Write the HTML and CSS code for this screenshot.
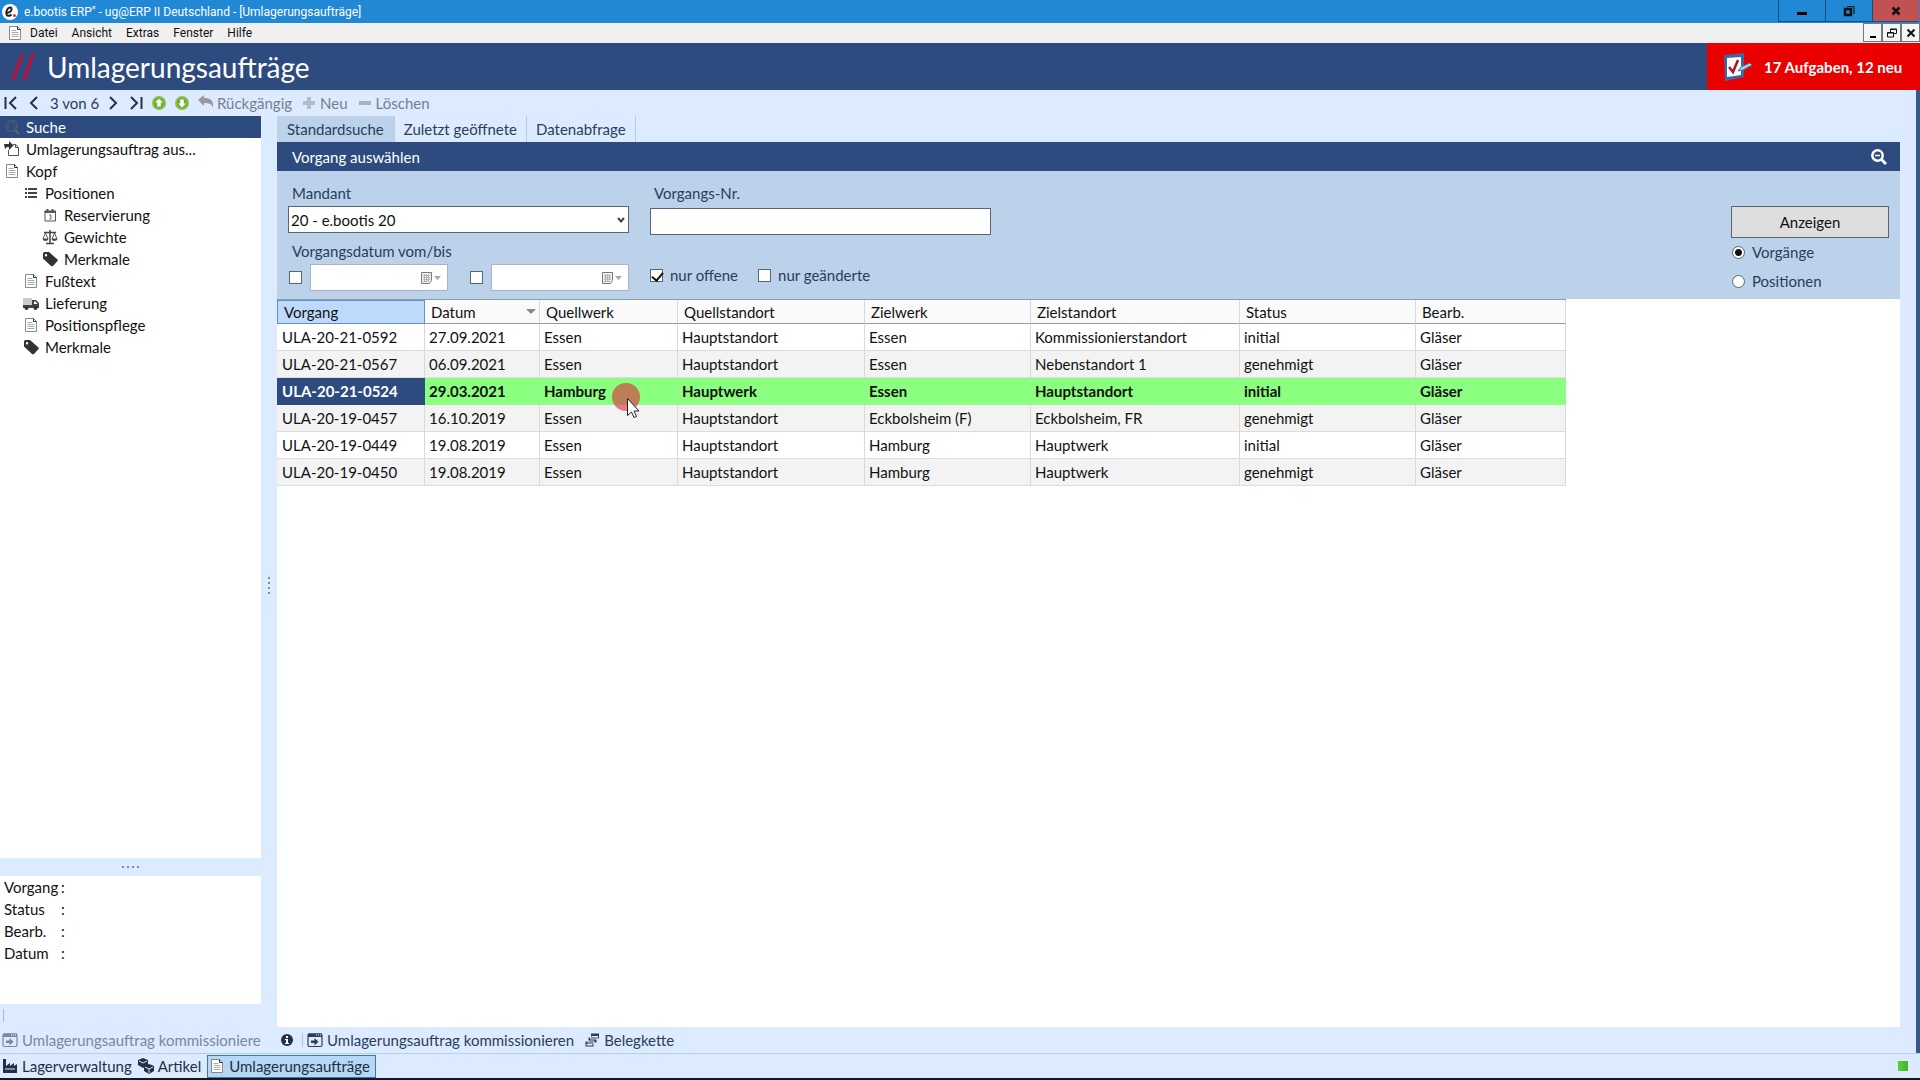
FILE: index.html
```html
<!DOCTYPE html>
<html lang="de">
<head>
  <meta charset="UTF-8" />
  <meta name="viewport" content="width=device-width, initial-scale=1" />
  <title>e.bootis ERP - Umlagerungsaufträge</title>
  <link rel="stylesheet" href="styles.css">
</head>
<body>

<svg class="sprite" aria-hidden="true">
  <symbol id="doc" viewBox="0 0 16 16">
    <path d="M2.500 1.500h8l3 3v10h-11z" fill="#fff" stroke="#888"/>
    <path d="M10.500 1.500v3h3" fill="none" stroke="#333"/>
    <path d="M4.500 5.500h5M4.500 7.500h7M4.500 9.500h7M4.500 11.500h7" stroke="#aaa"/>
  </symbol>
  <symbol id="import" viewBox="0 0 16 16">
    <path d="M9 3.500h2.500l3 3v8h-10V9M11.500 3.500v3h3" fill="none" stroke="#555"/>
    <path d="M0 3h5V0l4.500 4.500L5 9V6H3L1 8z" fill="#333"/>
  </symbol>
  <symbol id="search" viewBox="0 0 16 16">
    <circle cx="7.500" cy="7" r="5.500" fill="none" stroke="#5d6272"/>
    <circle cx="7.500" cy="7" r="3.500" fill="none" stroke="#4d566e"/>
    <path d="M11 11l4 4" stroke="#5d6272" stroke-width="2"/>
  </symbol>
  <symbol id="list" viewBox="0 0 16 16">
    <path d="M2 4h2M2 8h2M2 12h2M5 4h9M5 8h9M5 12h9" stroke="#444" stroke-width="2"/>
  </symbol>
  <symbol id="calendar" viewBox="0 0 16 16">
    <path d="M3 4.500h10.500v9.500H3z" fill="none" stroke="#555"/>
    <path d="M2.500 3.500h11.500v2.500H2.500zM4.500 2h2v3h-2zM9.500 2h2v3h-2z" fill="#555"/>
    <path d="M7 8h2v1.500H8h1V12H7" fill="none" stroke="#777"/>
  </symbol>
  <symbol id="scales" viewBox="0 0 16 16">
    <path d="M8 1v13M4 14.500h8M2 3.500h12" stroke="#444" stroke-width="1.500"/>
    <path d="M3.500 4L1 10h5L3.500 4M12.500 4L10 10h5l-2.500-6" fill="none" stroke="#555"/>
    <path d="M.5 10h6c-1 2.500-5 2.500-6 0M9.500 10h6c-1 2.500-5 2.500-6 0" fill="#444"/>
  </symbol>
  <symbol id="tag" viewBox="0 0 16 16">
    <path fill-rule="evenodd" d="M1 2.500Q1 1 2.500 1H7l8.500 7.500q.5 1 0 1.500L11 15q-1 .5-2 0L1 7.500zM4 3a1.200 1.200 0 100 2.400A1.200 1.200 0 004 3z" fill="#333"/>
  </symbol>
  <symbol id="truck" viewBox="0 0 16 16">
    <path d="M0 3h9v8H0z" fill="#ccc"/>
    <path fill-rule="evenodd" d="M0 10h9V5h4l3 3v5H0zM11 6.500V9h3.500L12.500 6.500z" fill="#444"/>
    <circle cx="3.500" cy="13" r="2" fill="#333"/><circle cx="12.500" cy="13" r="2" fill="#333"/>
  </symbol>
  <symbol id="window" viewBox="0 0 16 16">
    <rect x="1" y="2" width="14" height="12.500" rx="1.500" fill="none" stroke="currentColor" stroke-width="1.200"/>
    <path d="M1 1.500h14V5H1zM4 8.500h3.500V6l4 3.700-4 3.800V11H4z" fill="currentColor"/>
    <path d="M9 3h1M11 3h1M13 3h1" stroke="#fff"/>
  </symbol>
  <symbol id="cascade" viewBox="0 0 16 16">
    <path d="M6.500 1h9v6h-9zM4 5h9v6H4zM1 9h9v6H1z" fill="currentColor" stroke="#dcebff"/>
    <path d="M2.500 12h6v1.500h-6zM8 4h6v1H8z" fill="#dcebff"/>
  </symbol>
  <symbol id="up" viewBox="0 0 16 16">
    <circle cx="8" cy="8" r="8" fill="#8dc04a"/><circle cx="8" cy="8" r="6" fill="#74ad35"/>
    <path d="M8 3l4.500 4.500h-2.500V12H6V7.500H3.500z" fill="#fff"/>
  </symbol>
  <symbol id="calpick" viewBox="0 0 20 12">
    <path d="M.5.5h10v8l-2 3h-8z" fill="#f4f4f4" stroke="#777"/>
    <path d="M2 3.500h7M2 5.500h7M2 7.500h7M2 9.500h5M3.500 2v8M5.500 2v8M7.500 2v8" stroke="#aaa" stroke-width=".8"/>
    <path d="M13 4h7l-3.500 4z" fill="#aaa"/>
  </symbol>
</svg>

<header class="titlebar">
  <svg class="app-logo" viewBox="0 0 16 16"><circle cx="8" cy="8" r="8" fill="#fff"/><path d="M4 8.500c5 1 7-4 4.500-5C5.500 3 3.500 8 4.500 10.500c1 2 3.500 1.500 5 0" fill="none" stroke="#222" stroke-width="2"/><circle cx="12.500" cy="11.500" r="1.500" fill="#d33"/></svg>
  <span class="app-title">e.bootis ERP" - ug@ERP II Deutschland - [Umlagerungsaufträge]</span>
  <div class="window-buttons">
    <button aria-label="Minimieren"><svg viewBox="0 0 12 12"><path d="M1 7h10v3H1z"/></svg></button>
    <button aria-label="Verkleinern"><svg viewBox="0 0 12 12"><path d="M2 4h6v6H2z" fill="none" stroke="#111" stroke-width="2.500"/><path d="M4 1.500h7V9" fill="none" stroke="#111"/></svg></button>
    <button class="close" aria-label="Schließen"><svg viewBox="0 0 12 12"><path d="M2.500 2.500l7 7M9.500 2.500l-7 7" stroke="#111" stroke-width="2.500"/></svg></button>
  </div>
</header>

<nav class="menubar">
  <svg class="icon"><use href="#doc"/></svg>
  <a href="#">Datei</a>
  <a href="#">Ansicht</a>
  <a href="#">Extras</a>
  <a href="#">Fenster</a>
  <a href="#">Hilfe</a>
  <div class="mdi-buttons">
    <button aria-label="Fenster minimieren"><svg viewBox="0 0 10 10"><path d="M2 8h6v2H2z"/></svg></button>
    <button aria-label="Fenster verkleinern"><svg viewBox="0 0 10 10"><path d="M3.500 4V1h6v4.500H7M3 1.500h7M.5 4.500h6V9h-6zM0 5h7" fill="none" stroke="#111"/></svg></button>
    <button aria-label="Fenster schließen"><svg viewBox="0 0 10 10"><path d="M1.500 1.500l7 7M8.500 1.500l-7 7" stroke="#111" stroke-width="2"/></svg></button>
  </div>
</nav>

<div class="page-head">
  <svg class="slashes" viewBox="0 0 24 26"><path d="M9.500 0H13L3.500 26H0zM20.500 0H24l-9.500 26H11z" fill="#b3123c"/></svg>
  <h1>Umlagerungsaufträge</h1>
  <a class="tasks" href="#">
    <svg viewBox="0 0 30 30"><path d="M1 3l20-2v24L2 29z" fill="#3b69a8"/><path d="M4 6l14-1v18L4 25z" fill="#fff"/><path d="M6 15l4 5 5-12" fill="none" stroke="#b01030" stroke-width="2.500"/><path d="M15 19l3-4 9-4 2 2-9 5z" fill="#9fd4f2" stroke="#3b75aa"/></svg>
    <span>17 Aufgaben, 12 neu</span>
  </a>
</div>

<div class="client">
  <div class="toolbar">
    <button class="nav" aria-label="Erster"><svg viewBox="0 0 14 14"><path d="M1.500 1v12M12 1L6 7l6 6"/></svg></button>
    <button class="nav" aria-label="Zurück"><svg viewBox="0 0 14 14"><path d="M10 1L4 7l6 6"/></svg></button>
    <span class="position">3 von 6</span>
    <button class="nav" aria-label="Weiter"><svg viewBox="0 0 14 14"><path d="M4 1l6 6-6 6"/></svg></button>
    <button class="nav" aria-label="Letzter"><svg viewBox="0 0 14 14"><path d="M12.500 1v12M2 1l6 6-6 6"/></svg></button>
    <button class="round" aria-label="Nach oben"><svg><use href="#up"/></svg></button>
    <button class="round down" aria-label="Nach unten"><svg><use href="#up"/></svg></button>
    <button class="action" disabled><svg class="icon" viewBox="0 0 16 16"><path d="M0 5l6-5v3c6 0 10 2 9 10-1-4-4-5-9-5v3z" fill="#999"/></svg>Rückgängig</button>
    <button class="action" disabled><svg class="icon" viewBox="0 0 16 16"><path d="M6 2h4v4h4v4h-4v4H6v-4H2V6h4z" fill="#b4bcc6"/></svg>Neu</button>
    <button class="action" disabled><svg class="icon" viewBox="0 0 16 16"><path d="M2 6h12v4H2z" fill="#aab2bc"/></svg>Löschen</button>
  </div>

  <div class="workspace">
    <aside class="sidebar">
      <ul class="tree">
        <li class="selected"><a href="#"><svg class="icon"><use href="#search"/></svg>Suche</a></li>
        <li><a href="#"><svg class="icon"><use href="#import"/></svg>Umlagerungsauftrag aus...</a></li>
        <li><a href="#"><svg class="icon"><use href="#doc"/></svg>Kopf</a></li>
        <li class="level-1"><a href="#"><svg class="icon"><use href="#list"/></svg>Positionen</a></li>
        <li class="level-2"><a href="#"><svg class="icon"><use href="#calendar"/></svg>Reservierung</a></li>
        <li class="level-2"><a href="#"><svg class="icon"><use href="#scales"/></svg>Gewichte</a></li>
        <li class="level-2"><a href="#"><svg class="icon"><use href="#tag"/></svg>Merkmale</a></li>
        <li class="level-1"><a href="#"><svg class="icon"><use href="#doc"/></svg>Fußtext</a></li>
        <li class="level-1"><a href="#"><svg class="icon"><use href="#truck"/></svg>Lieferung</a></li>
        <li class="level-1"><a href="#"><svg class="icon"><use href="#doc"/></svg>Positionspflege</a></li>
        <li class="level-1"><a href="#"><svg class="icon"><use href="#tag"/></svg>Merkmale</a></li>
      </ul>
      <div class="splitter"><i></i><i></i><i></i><i></i></div>
      <dl class="info">
        <dt>Vorgang</dt><dd>:</dd>
        <dt>Status</dt><dd>:</dd>
        <dt>Bearb.</dt><dd>:</dd>
        <dt>Datum</dt><dd>:</dd>
      </dl>
      <div class="grip"></div>
    </aside>

    <div class="splitter vertical"><i></i><i></i><i></i><i></i></div>

    <main>
      <nav class="tabs">
        <a class="active" href="#">Standardsuche</a>
        <a href="#">Zuletzt geöffnete</a>
        <a href="#">Datenabfrage</a>
      </nav>

      <div class="panel-head">
        <h2>Vorgang auswählen</h2>
        <button aria-label="Suche einklappen"><svg viewBox="0 0 16 16"><circle cx="6.500" cy="6.500" r="5.200" fill="none" stroke="#fff" stroke-width="2.500"/><path d="M10.500 10.500l4.500 4.500" stroke="#fff" stroke-width="3"/><path d="M4 6.500h5" stroke="#fff" stroke-width="1.500"/></svg></button>
      </div>

      <form class="filter">
        <div class="column">
          <label class="caption" for="mandant">Mandant</label>
          <div class="select-box">
            <select id="mandant"><option>20 - e.bootis 20</option></select>
            <svg viewBox="0 0 8 8"><path d="M1 2l3 3.500L7 2" fill="none" stroke="#444" stroke-width="2"/></svg>
          </div>
          <span class="caption second">Vorgangsdatum vom/bis</span>
          <div class="dates">
            <input type="checkbox" aria-label="Datum vom aktiv">
            <div class="date-box"><input type="text" aria-label="Datum vom"><svg><use href="#calpick"/></svg></div>
            <input type="checkbox" aria-label="Datum bis aktiv">
            <div class="date-box"><input type="text" aria-label="Datum bis"><svg><use href="#calpick"/></svg></div>
          </div>
        </div>
        <div class="column">
          <label class="caption" for="nummer">Vorgangs-Nr.</label>
          <input class="text-box" type="text" id="nummer">
          <div class="checks">
            <label><input type="checkbox" checked>nur offene</label>
            <label><input type="checkbox">nur geänderte</label>
          </div>
        </div>
        <div class="submit">
          <button type="button">Anzeigen</button>
          <label><input type="radio" name="art" checked>Vorgänge</label>
          <label><input type="radio" name="art">Positionen</label>
        </div>
      </form>

      <div class="results">
        <table>
          <colgroup><col class="c-vorgang"><col class="c-datum"><col class="c-qwerk"><col class="c-qort"><col class="c-zwerk"><col class="c-zort"><col class="c-status"><col class="c-bearb"></colgroup>
          <thead>
            <tr><th class="focus">Vorgang</th><th class="sorted">Datum</th><th>Quellwerk</th><th>Quellstandort</th><th>Zielwerk</th><th>Zielstandort</th><th>Status</th><th>Bearb.</th></tr>
          </thead>
          <tbody>
            <tr><td>ULA-20-21-0592</td><td>27.09.2021</td><td>Essen</td><td>Hauptstandort</td><td>Essen</td><td>Kommissionierstandort</td><td>initial</td><td>Gläser</td></tr>
            <tr><td>ULA-20-21-0567</td><td>06.09.2021</td><td>Essen</td><td>Hauptstandort</td><td>Essen</td><td>Nebenstandort 1</td><td>genehmigt</td><td>Gläser</td></tr>
            <tr class="current"><td>ULA-20-21-0524</td><td>29.03.2021</td><td class="pointed">Hamburg
              <svg class="pointer" viewBox="0 0 30 36"><circle cx="14" cy="14" r="14" fill="#dc283c" fill-opacity=".6"/><path d="M15.500 15.500v17l4-3.500 2.500 5.500 2.500-1-2.500-5.500h5z" fill="#fff" stroke="#222"/></svg>
            </td><td>Hauptwerk</td><td>Essen</td><td>Hauptstandort</td><td>initial</td><td>Gläser</td></tr>
            <tr><td>ULA-20-19-0457</td><td>16.10.2019</td><td>Essen</td><td>Hauptstandort</td><td>Eckbolsheim (F)</td><td>Eckbolsheim, FR</td><td>genehmigt</td><td>Gläser</td></tr>
            <tr><td>ULA-20-19-0449</td><td>19.08.2019</td><td>Essen</td><td>Hauptstandort</td><td>Hamburg</td><td>Hauptwerk</td><td>initial</td><td>Gläser</td></tr>
            <tr><td>ULA-20-19-0450</td><td>19.08.2019</td><td>Essen</td><td>Hauptstandort</td><td>Hamburg</td><td>Hauptwerk</td><td>genehmigt</td><td>Gläser</td></tr>
          </tbody>
        </table>
      </div>
    </main>
  </div>

  <div class="actionbar">
    <div class="left"><button disabled><svg class="icon"><use href="#window"/></svg>Umlagerungsauftrag kommissioniere</button></div>
    <button class="about" aria-label="Info"><svg viewBox="0 0 12 12"><circle cx="6" cy="6" r="6" fill="#222f44"/><path d="M5 2h2v2H5zM4 5h3v4h1v1H4V9h1V6H4z" fill="#fff"/></svg></button>
    <button><svg class="icon"><use href="#window"/></svg>Umlagerungsauftrag kommissionieren</button>
    <button><svg class="icon"><use href="#cascade"/></svg>Belegkette</button>
  </div>
</div>

<footer class="taskbar">
  <a href="#"><svg class="icon" viewBox="0 0 16 16"><path d="M1 1h3v7l4-3v3l4-3v3l3-2v9H1z" fill="#222f44"/><path d="M3 11h10" stroke="#dcebff"/></svg>Lagerverwaltung</a>
  <a href="#"><svg class="icon" viewBox="0 0 16 16"><path d="M5 0l5 2v5l-5 3-5-3V2zM11 6l5 2v5l-5 3-5-3V8z" fill="#222f44"/><path d="M1 3l4 2 4-2M7 9l4 2 4-2M11 11v4" stroke="#dcebff" fill="none"/></svg>Artikel</a>
  <a class="active" href="#"><svg class="icon"><use href="#doc"/></svg>Umlagerungsaufträge</a>
  <span class="status-light"></span>
</footer>

</body>
</html>
```
FILE: styles.css
```css
* { box-sizing: border-box; }
body {
  margin: 0; min-height: 100vh; display: flex; flex-direction: column;
  font-family: Lato, "Liberation Sans", sans-serif; font-size: 15px; line-height: 22px;
  color: #111; background: #dcebff; border-bottom: 2px solid #16171f;
}
a { color: inherit; text-decoration: none; }
button { font: inherit; color: inherit; background: none; border: none; padding: 0; }
h1, h2 { margin: 0; font-weight: normal; }
.sprite { position: absolute; width: 0; height: 0; }
.icon { width: 16px; height: 16px; flex: none; }

/* window frame */
.titlebar, .menubar { font-family: Roboto, "Open Sans", sans-serif; font-size: 12px; display: flex; align-items: center; }
.titlebar { height: 23px; background: #2088d4; color: #fff; padding-left: 2px; gap: 6px; }
.app-logo { width: 16px; height: 16px; }
.window-buttons, .mdi-buttons { display: flex; margin-left: auto; align-self: stretch; }
.window-buttons { height: 22px; padding-right: 1px; }
.window-buttons button {
  width: 47px; display: flex; align-items: center; justify-content: center;
  border: 1px solid #164f80; border-top: none; border-right: none;
}
.window-buttons .close { background: #c25152; }
.window-buttons svg { width: 12px; height: 12px; }
.menubar { height: 20px; background: #f0f0f0; padding-left: 7px; gap: 14px; }
.menubar .icon { margin-right: -7px; }
.mdi-buttons button { width: 19px; height: 19px; border: 1px solid #777; display: flex; align-items: center; justify-content: center; background: #f5f5f5; }
.mdi-buttons svg { width: 10px; height: 10px; }

.page-head { height: 47px; background: #2d4b7f; color: #fff; display: flex; align-items: center; padding-left: 11px; }
.slashes { width: 24px; height: 26px; }
.page-head h1 { font-size: 28px; line-height: 40px; margin-left: 12px; }
.tasks { margin-left: auto; width: 213px; align-self: stretch; background: #eb0000; font-weight: bold; display: flex; align-items: center; gap: 11px; padding-left: 16px; }
.tasks svg { width: 30px; height: 30px; }

.client { flex: 1; display: flex; flex-direction: column; border-right: 4px solid #37588c; color: #2a3d5c; }

/* record toolbar */
.toolbar { height: 26px; display: flex; align-items: center; gap: 9px; padding-left: 4px; }
.toolbar button { display: flex; align-items: center; }
.nav svg { width: 14px; height: 14px; fill: none; stroke: #22334f; stroke-width: 2; }
.position { width: 47px; white-space: nowrap; }
.round svg { width: 14px; height: 14px; }
.action { color: #75808f; gap: 3px; }
.down svg { transform: rotate(180deg); }

.workspace { flex: 1; display: flex; }
.sidebar { width: 261px; display: flex; flex-direction: column; color: #111; }
.tree { list-style: none; margin: 0; padding: 0; flex: 1; background: #fff; }
.tree a { display: flex; align-items: center; gap: 6px; padding-left: 4px; }
.tree .level-1 { padding-left: 19px; }
.tree .level-2 { padding-left: 38px; }
.tree .selected { background: #2d4b7f; color: #fff; }
.splitter { height: 18px; display: flex; gap: 3px; align-items: center; justify-content: center; }
.splitter i { width: 2px; height: 2px; background: #7f8ca0; }
.splitter.vertical { width: 16px; height: auto; flex-direction: column; padding-top: 28px; }
.info { margin: 0; height: 128px; background: #fff; padding: 0 4px; display: grid; grid-template-columns: 57px 1fr; align-content: start; }
.info dd { margin: 0; }
.grip { height: 23px; margin: 0 3px; background: linear-gradient(#a9b8cc, #a9b8cc) 0 5px / 1px 13px no-repeat; }

main { flex: 1; display: flex; flex-direction: column; margin-right: 16px; }
.tabs { display: flex; height: 26px; line-height: 26px; }
.tabs a { padding: 0 9px; border-right: 1px solid #b9cbe2; }
.tabs .active { background: #bbd2ea; padding: 0 10px; }
.panel-head { height: 29px; background: #2d4b7f; color: #fff; display: flex; align-items: center; justify-content: space-between; padding: 0 13px 0 15px; }
.panel-head h2 { font-size: 15px; }
.panel-head svg { width: 16px; height: 16px; display: block; }

/* search form */
.filter { background: #bbd2ea; display: flex; gap: 21px; padding: 11px 11px 7px; }
.column { width: 341px; }
.caption { display: block; padding-left: 4px; }
.caption.second { margin-top: 7px; }
.filter input, .filter select { margin: 0; font: inherit; color: #111; background: #fff; border: 1px solid #5b6473; border-radius: 0; appearance: none; }
.select-box { position: relative; margin-top: 2px; }
.select-box select { display: block; width: 100%; height: 27px; padding: 0 2px; }
.select-box svg { position: absolute; right: 4px; top: 10px; width: 8px; height: 8px; }
.filter .text-box { display: block; width: 100%; height: 27px; margin-top: 4px; }
.filter input[type="checkbox"] { width: 13px; height: 13px; flex: none; }
.filter input[type="checkbox"]:checked { position: relative; }
.filter input[type="checkbox"]:checked::after {
  content: ""; position: absolute; left: 3px; top: 0; width: 5px; height: 9px;
  border: solid #111; border-width: 0 2px 2px 0; transform: rotate(40deg);
}
.dates { display: flex; align-items: center; gap: 8px; padding-left: 1px; margin-top: 2px; }
.date-box { display: flex; align-items: center; width: 138px; height: 27px; background: #fff; border: 1px solid #a8b4c4; padding-right: 6px; }
.date-box + input { margin-left: 14px !important; }
.filter .date-box input { flex: 1; min-width: 0; border: none; }
.date-box svg { width: 20px; height: 12px; }
.checks { display: flex; gap: 20px; margin-top: 29px; }
.checks label, .submit label { display: flex; align-items: center; gap: 7px; }
.submit { margin-left: auto; width: 158px; padding-top: 24px; }
.submit button { width: 100%; height: 32px; background: #dedede; border: 1px solid #5b6473; color: #111; }
.submit label { margin-top: 3px; height: 22px; }
.submit label + label { margin-top: 7px; }
.filter input[type="radio"] { width: 13px; height: 13px; border-radius: 50%; margin-left: 1px; }
.filter input[type="radio"]:checked { background: radial-gradient(circle, #111 3px, #fff 4px); }

/* result list */
.results { flex: 1; background: #fff; color: #111; }
table { border-collapse: separate; border-spacing: 0; table-layout: fixed; width: 1289px; border-top: 1px solid #8d9db0; }
.c-vorgang { width: 148px; }
.c-datum { width: 115px; }
.c-qwerk { width: 138px; }
.c-qort { width: 187px; }
.c-zwerk { width: 166px; }
.c-zort { width: 209px; }
.c-status { width: 176px; }
.c-bearb { width: 150px; }
th, td { text-align: left; border-right: 1px solid #d9d9d9; }
th { height: 24px; font-weight: normal; padding: 0 6px; background: #fafafa; border-bottom: 1px solid #999; }
th.focus { background: #bfd9fc; border: 1px solid #5c93c4; }
th.sorted { position: relative; }
th.sorted::after { content: ""; position: absolute; right: 3px; top: 9px; border: 5px solid transparent; border-top-color: #888; border-bottom: none; }
td { height: 27px; padding: 0 4px; border-bottom: 1px solid #dcdcdc; }
td:first-child { padding-left: 5px; }
tbody tr:nth-child(even) { background: #f3f3f3; }
.current td { background: #8aff80; border-color: #98f593; font-weight: bold; }
.current td:first-child { background: #2d4b7f; border-color: #2d4b7f; color: #fff; }
.pointed { position: relative; }
.pointer { position: absolute; left: 72px; top: 5px; width: 30px; height: 36px; z-index: 1; }

/* bottom bars */
.actionbar { height: 26px; display: flex; align-items: center; gap: 10px; }
.actionbar button { display: flex; align-items: center; gap: 4px; }
.actionbar .left { width: 261px; padding-left: 2px; overflow: hidden; white-space: nowrap; color: #7a8799; }
.actionbar .about { margin-left: 10px; margin-right: -6px; padding-right: 9px; border-right: 1px solid #b5c4d8; height: 14px; }
.about svg { width: 12px; height: 12px; }
.taskbar { height: 25px; display: flex; align-items: center; gap: 6px; border-top: 1px solid #b5cfe8; color: #222f44; padding-left: 2px; }
.taskbar a { display: flex; align-items: center; gap: 4px; }
.taskbar .active { background: #b5d8f5; border: 1px solid #3b78ab; height: 23px; padding: 0 5px 0 1px; }
.status-light { width: 10px; height: 10px; background: linear-gradient(90deg, #58d038, #44b528); margin-left: auto; margin-right: 12px; }
```
